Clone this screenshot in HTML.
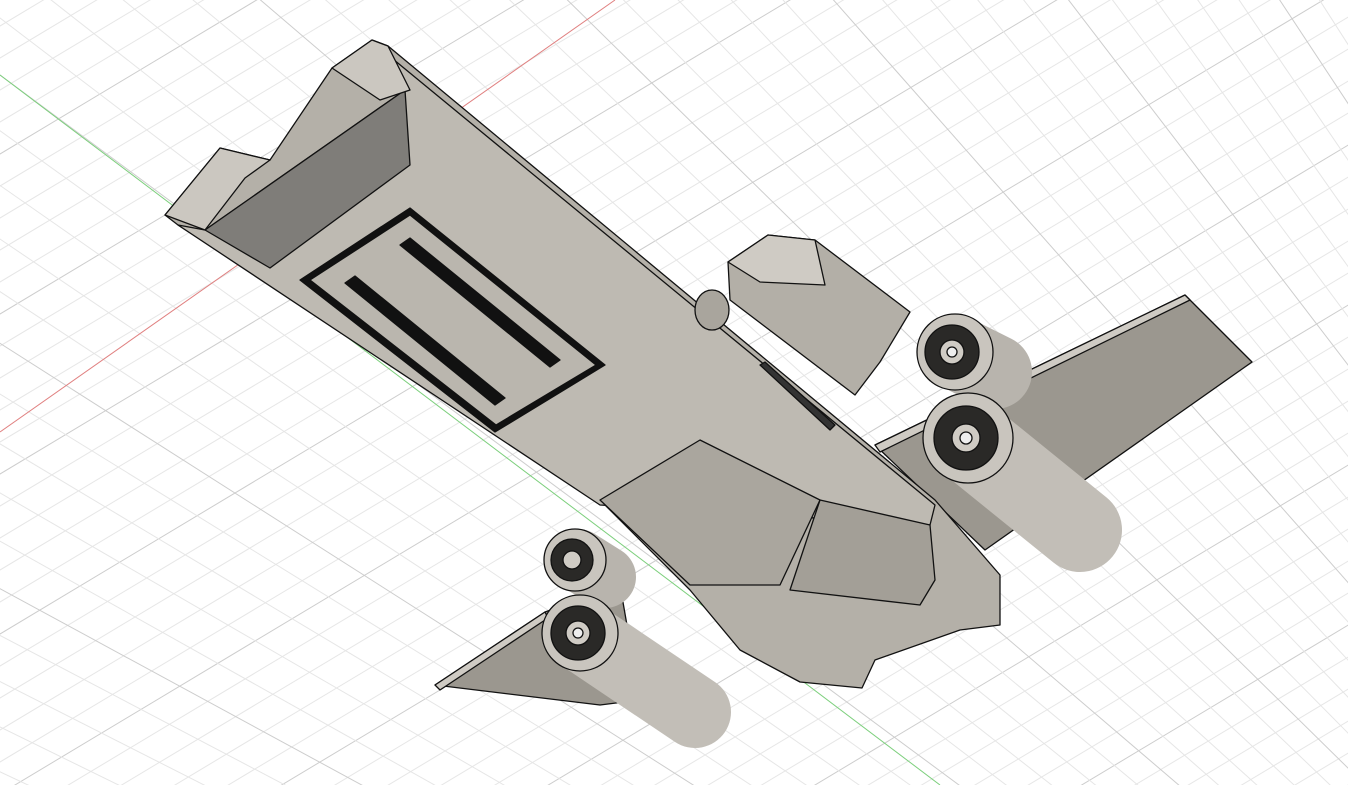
<!DOCTYPE html><html><head><style>html,body{margin:0;padding:0;background:#fff;overflow:hidden;width:1348px;height:785px}svg{display:block}</style></head><body>
<svg id="s" width="1348" height="785" viewBox="0 0 1348 785" xmlns="http://www.w3.org/2000/svg">
<g id="grid" stroke-width="1"></g>
<line x1="0" y1="432" x2="615" y2="0" stroke="#e08080" stroke-width="1"/>
<line x1="0" y1="75" x2="940" y2="785" stroke="#7ccf7c" stroke-width="1"/>
<g stroke="#111" stroke-width="1.3" stroke-linejoin="round">
<polygon points="875,445 1185,295 1252,362 985,550" fill="#9b978f"/>
<polygon points="875,445 1185,295 1190,300 880,452" fill="#cfcbc4"/>
<polygon points="435,685 545,612 620,585 640,700 600,705" fill="#9b978f"/>
<polygon points="435,685 545,612 548,618 440,690" fill="#cfcbc4"/>
<line x1="955" y1="352" x2="995" y2="372" stroke="#b8b4ad" stroke-width="74" stroke-linecap="round"/>
<circle cx="955" cy="352" r="38" fill="#c9c5be"/><circle cx="952" cy="352" r="27" fill="#2a2927"/><circle cx="952" cy="352" r="12" fill="#cfcbc4"/><circle cx="952" cy="352" r="5" fill="#eee"/>
<line x1="578" y1="560" x2="605" y2="577" stroke="#b8b4ad" stroke-width="62" stroke-linecap="round"/>
<circle cx="575" cy="560" r="31" fill="#c9c5be"/><circle cx="572" cy="560" r="21" fill="#2a2927"/><circle cx="572" cy="560" r="9" fill="#cfcbc4"/>
<polygon points="165,215 220,148 270,160 332,68 372,40 388,46 935,500 1000,575 1000,625 960,630 875,660 862,688 800,682 740,650 690,590 600,500 178,225" fill="#b4b0a8"/>
<polygon points="382,50 935,505 930,525 600,505 178,225 205,230 405,90" fill="#bebab2"/>
<polygon points="600,500 690,585 780,585 820,500 700,440" fill="#aaa69e"/>
<polygon points="820,500 930,525 935,580 920,605 790,590" fill="#a39f97"/>
<polygon points="205,230 405,90 410,165 270,268" fill="#7f7d79"/>
<polygon points="165,215 220,148 270,160 245,178 205,230" fill="#cbc7c0"/>
<polygon points="332,68 372,40 388,46 410,90 380,100" fill="#cbc7c0"/>
<polygon points="300,280 410,208 605,365 495,432" fill="#111"/>
<polygon points="310,280 410,215 596,365 496,425" fill="#bab6ae"/>
<polygon points="400,245 410,238 560,360 550,367" fill="#111"/>
<polygon points="345,283 355,276 505,398 495,405" fill="#111"/>
<polygon points="760,365 765,362 835,425 830,430" fill="#333"/>
<ellipse cx="712" cy="310" rx="17" ry="20" fill="#a9a59d"/>
<polygon points="728,262 768,235 815,240 910,312 880,362 855,395 730,300" fill="#b3afa7"/>
<polygon points="728,262 768,235 815,240 825,285 760,282" fill="#cfcbc4"/>
<line x1="975" y1="445" x2="1080" y2="530" stroke="#c2beb7" stroke-width="84" stroke-linecap="round"/>
<circle cx="968" cy="438" r="45" fill="#c9c5be"/><circle cx="966" cy="438" r="32" fill="#2a2927"/><circle cx="966" cy="438" r="14" fill="#cfcbc4"/><circle cx="966" cy="438" r="6" fill="#eee"/>
<line x1="588" y1="640" x2="695" y2="712" stroke="#c2beb7" stroke-width="72" stroke-linecap="round"/>
<circle cx="580" cy="633" r="38" fill="#c9c5be"/><circle cx="578" cy="633" r="27" fill="#2a2927"/><circle cx="578" cy="633" r="12" fill="#cfcbc4"/><circle cx="578" cy="633" r="5" fill="#eee"/>
</g>
</svg>
<script>
var g=document.getElementById('grid'),ns='http://www.w3.org/2000/svg';
function L(a,b,c,d,maj){var l=document.createElementNS(ns,'line');l.setAttribute('x1',a);l.setAttribute('y1',b);l.setAttribute('x2',c);l.setAttribute('y2',d);l.setAttribute('stroke',maj?'#cdcdcd':'#e6e6e6');g.appendChild(l);}
for(var i=-40;i<100;i++){var y=i*32;L(-10,y,1360,y-1370*0.6,i%5==0);}
var vx=2600,vy=2000;var a0=Math.atan2(2000-75,2600-0);
for(var i=-60;i<60;i++){var a=a0+i*0.014;var dx=Math.cos(a),dy=Math.sin(a);L(vx,vy,vx-dx*5000,vy-dy*5000,i%5==0);}
</script>
</body></html>
